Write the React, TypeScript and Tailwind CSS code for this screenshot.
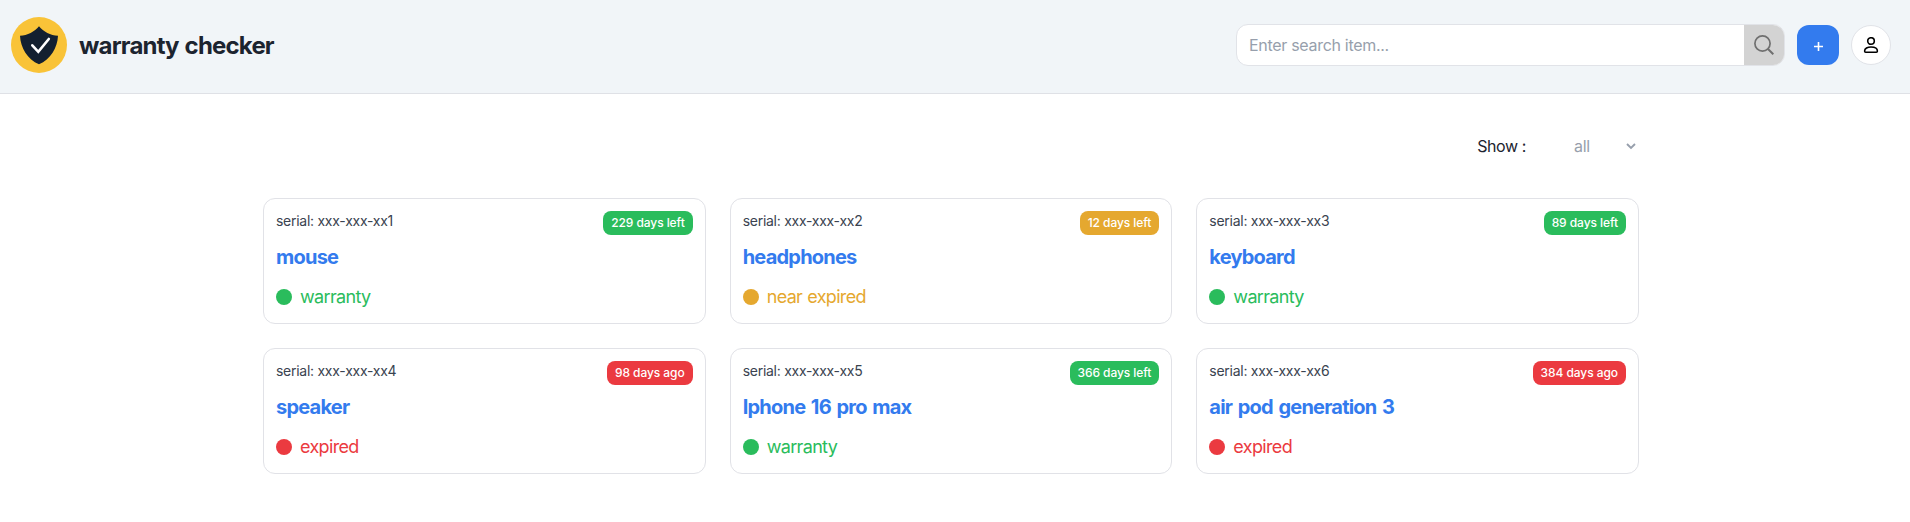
import React from "react";

type Status = "warranty" | "near expired" | "expired";

interface Item {
  serial: string;
  name: string;
  badge: string;
  status: Status;
}

const items: Item[] = [
  { serial: "xxx-xxx-xx1", name: "mouse", badge: "229 days left", status: "warranty" },
  { serial: "xxx-xxx-xx2", name: "headphones", badge: "12 days left", status: "near expired" },
  { serial: "xxx-xxx-xx3", name: "keyboard", badge: "89 days left", status: "warranty" },
  { serial: "xxx-xxx-xx4", name: "speaker", badge: "98 days ago", status: "expired" },
  { serial: "xxx-xxx-xx5", name: "Iphone 16 pro max", badge: "366 days left", status: "warranty" },
  { serial: "xxx-xxx-xx6", name: "air pod generation 3", badge: "384 days ago", status: "expired" },
];

const fill: Record<Status, string> = {
  warranty: "bg-[#2abc5c]",
  "near expired": "bg-[#e5a82f]",
  expired: "bg-[#eb3a40]",
};

const ink: Record<Status, string> = {
  warranty: "text-[#2abc5c]",
  "near expired": "text-[#e5a82f]",
  expired: "text-[#eb3a40]",
};

function Logo() {
  return (
    <svg className="size-14 shrink-0" viewBox="0 0 56 56">
      <circle cx="28" cy="28" r="28" fill="#f9c338" />
      <path
        d="M28 9.2 C23.5 14.5 16.5 18.5 9 18.7 C9.5 30.5 16.5 42.5 28 47.3 C39.5 42.5 46.5 30.5 47 18.7 C39.5 18.5 32.5 14.5 28 9.2 Z"
        fill="#132030"
      />
      <path d="M21.3 28.3 L27.3 34.8 L37.8 22" fill="none" stroke="#fff" strokeWidth="2.6" strokeLinecap="round" />
    </svg>
  );
}

function Header() {
  return (
    <header className="flex h-[94px] items-center border-b border-[#dfe1e6] bg-[#f1f5f8] pb-[3px] pl-[11px] pr-[19px]">
      <Logo />
      <h1 className="mt-0.5 ml-3 text-2xl font-bold tracking-[-0.82px] text-[#1c242f] [word-spacing:1px]">
        warranty checker
      </h1>
      <div className="ml-auto flex items-center">
        <div className="flex h-[42px] w-[549px] overflow-hidden rounded-xl border border-[#e1e3e8] bg-white">
          <input
            className="min-w-0 flex-1 pl-3 text-base tracking-[-0.3px] outline-none placeholder:text-[#979fac]"
            placeholder="Enter search item..."
          />
          <button className="flex w-10 items-center justify-center bg-[#d3d3d3]">
            <svg className="size-5" viewBox="0 0 20 20" fill="none" stroke="#707070" strokeWidth="1.7">
              <circle cx="8.5" cy="8.5" r="7.6" />
              <path d="M14 14 L19.3 19.3" strokeWidth="2" />
            </svg>
          </button>
        </div>
        <button className="ml-3 flex h-10 w-[42px] items-center justify-center rounded-xl bg-[#337bee] text-white">
          <svg className="mt-[3px] size-[9px]" viewBox="0 0 9 9" stroke="currentColor" strokeWidth="1.6">
            <path d="M4.5 0 V9 M0 4.5 H9" />
          </svg>
        </button>
        <button className="ml-3 flex size-10 items-center justify-center rounded-full border border-[#e1e3e8] bg-white">
          <svg className="size-4" viewBox="0 0 16 16" fill="none" stroke="#000" strokeWidth="1.6">
            <circle cx="8" cy="4" r="3.3" />
            <path d="M8 10 C4.6 10 1.6 11.4 1.6 13.9 C1.6 14.9 1.9 15.2 2.7 15.2 H13.3 C14.1 15.2 14.4 14.9 14.4 13.9 C14.4 11.4 11.4 10 8 10 Z" />
          </svg>
        </button>
      </div>
    </header>
  );
}

function Card({ item }: { item: Item }) {
  return (
    <article className="flex h-[126px] flex-col rounded-xl border border-[#e1e2e7] p-3">
      <div className="flex h-6 items-start justify-between">
        <p className="text-sm leading-5 tracking-[-0.27px] text-[#3a4350]">serial: {item.serial}</p>
        <span className={`rounded-lg px-2 py-1 text-xs font-medium tracking-[-0.07px] text-white ${fill[item.status]}`}>
          {item.badge}
        </span>
      </div>
      <h2 className="mt-2 text-xl leading-7 font-bold tracking-[-0.78px] text-[#337bee] [word-spacing:1.6px]">
        {item.name}
      </h2>
      <div className="mt-3 flex items-center gap-2">
        <span className={`size-4 rounded-full ${fill[item.status]}`} />
        <span className={`text-lg leading-7 tracking-[-0.66px] [word-spacing:0.6px] ${ink[item.status]}`}>
          {item.status}
        </span>
      </div>
    </article>
  );
}

export default function App() {
  return (
    <div className="min-h-[522px] bg-white font-['Inter',sans-serif]">
      <Header />
      <main className="ml-[263px] w-[1376px]">
        <div className="flex h-[104px] items-center justify-end">
          <span className="text-base tracking-[-0.4px] text-[#1c242f]">Show :</span>
          <button className="ml-12 flex w-[65px] items-center justify-between text-base tracking-[-0.3px] text-[#979fac]">
            all
            <svg className="mr-[3px] size-2.5" viewBox="0 0 10 10" fill="none" stroke="currentColor" strokeWidth="1.9">
              <path d="M1 3 L5 7 L9 3" />
            </svg>
          </button>
        </div>
        <div className="grid grid-cols-3 gap-6">
          {items.map((item) => (
            <Card key={item.serial} item={item} />
          ))}
        </div>
      </main>
    </div>
  );
}
